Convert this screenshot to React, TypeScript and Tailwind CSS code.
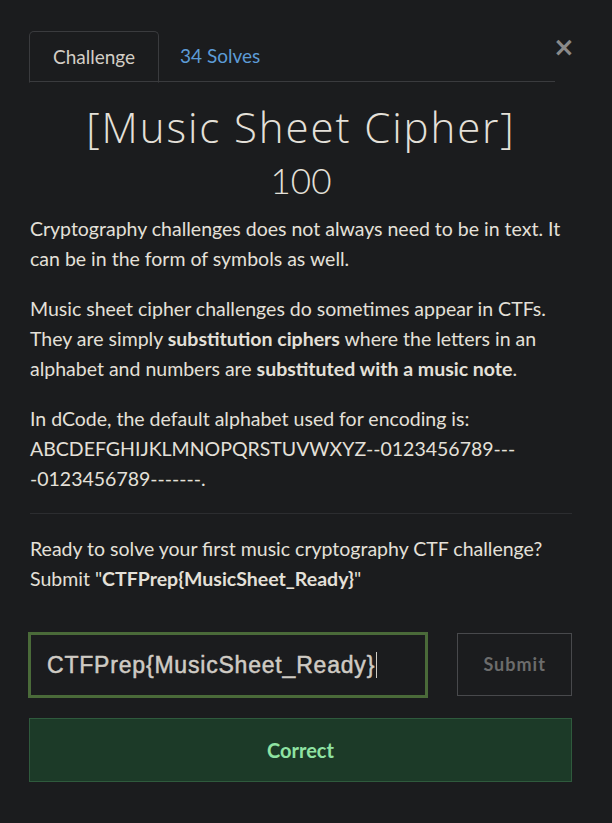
import React from "react";

export default function App() {
  return (
    <div className="w-[612px] h-[823px] bg-[#1b1c1e] text-[#e4e0d9] overflow-hidden" style={{ fontFamily: "Lato, 'Open Sans', sans-serif" }}>
      <div className="pl-[29px] pr-[40px] pt-[31px]">
        <div className="flex items-start">
          <div className="flex w-[526px] border-b border-[#3a3b3e] h-[51px]">
            <div className="w-[130px] h-[52px] border border-[#3a3b3e] border-b-[#1b1c1e] rounded-t-[5px] flex items-center justify-center text-[19px] text-[#d3cec6] -mb-px">
              Challenge
            </div>
            <div className="pl-[21px] flex items-center text-[19px] text-[#5d9bd6]">34 Solves</div>
          </div>
          <div className="-ml-[2px] mt-[6px] w-[14px] text-[#8a8a8a] text-[26px] leading-[20px] font-bold" style={{ fontFamily: "'DejaVu Sans', sans-serif" }}>
            ×
          </div>
        </div>

        <div className="pl-px">
          <h1 className="mt-[23px] text-center text-[42px] leading-[44px] font-light tracking-[1.9px] text-[#e4e0d9]" style={{ fontFamily: "'Open Sans', sans-serif" }}>
            [Music Sheet Cipher]
          </h1>
          <div className="mt-[14px] text-center text-[35px] leading-[34px] font-light text-[#e4e0d9]" style={{ fontFamily: "Lato, sans-serif" }}>
            100
          </div>

          <div className="mt-[17px] text-[19.5px] leading-[30px]">
            <p>Cryptography challenges does not always need to be in text. It can be in the form of symbols as well.</p>
            <p className="mt-[20px]">
              Music sheet cipher challenges do sometimes appear in CTFs. They are simply <strong className="font-bold">substitution ciphers</strong> where the letters in an alphabet and numbers are <strong className="font-bold">substituted with a music note</strong>.
            </p>
            <p className="mt-[20px] break-words">
              In dCode, the default alphabet used for encoding is: ABCDEFGHIJKLMNOPQRSTUVWXYZ--0123456789----0123456789-------.
            </p>
          </div>

          <div className="mt-[19px] border-t border-[#2c2d30]" />

          <p className="mt-[20px] text-[19.5px] leading-[30px]">
            Ready to solve your first music cryptography CTF challenge? Submit "<strong className="font-bold">CTFPrep{"{"}MusicSheet_Ready{"}"}</strong>"
          </p>
        </div>

        <div className="mt-[38px] flex items-start">
          <div className="w-[401px] h-[66px] border-[3px] border-[#4a6a39] -ml-[1px] flex items-center pl-[16px]">
            <span className="text-[23px] font-normal tracking-[0.8px] text-[#cfcbc4] [-webkit-text-stroke:0.5px_#cfcbc4]" style={{ fontFamily: "'Liberation Sans', Arial, sans-serif" }}>
              CTFPrep{"{"}MusicSheet_Ready{"}"}
            </span>
            <span className="w-px h-[26px] bg-[#cfcbc4] ml-[1px]" />
          </div>
          <div className="ml-[29px] mt-px w-[115px] h-[63px] border border-[#48494c] flex items-center justify-center text-[18px] font-bold tracking-[1px] text-[#6c6c6c]">
            Submit
          </div>
        </div>

        <div className="mt-[20px] w-[543px] h-[64px] bg-[#1c3a28] border border-[#2f5a3d] flex items-center justify-center text-[20px] font-bold text-[#8fe3a3]">
          Correct
        </div>
      </div>
    </div>
  );
}
